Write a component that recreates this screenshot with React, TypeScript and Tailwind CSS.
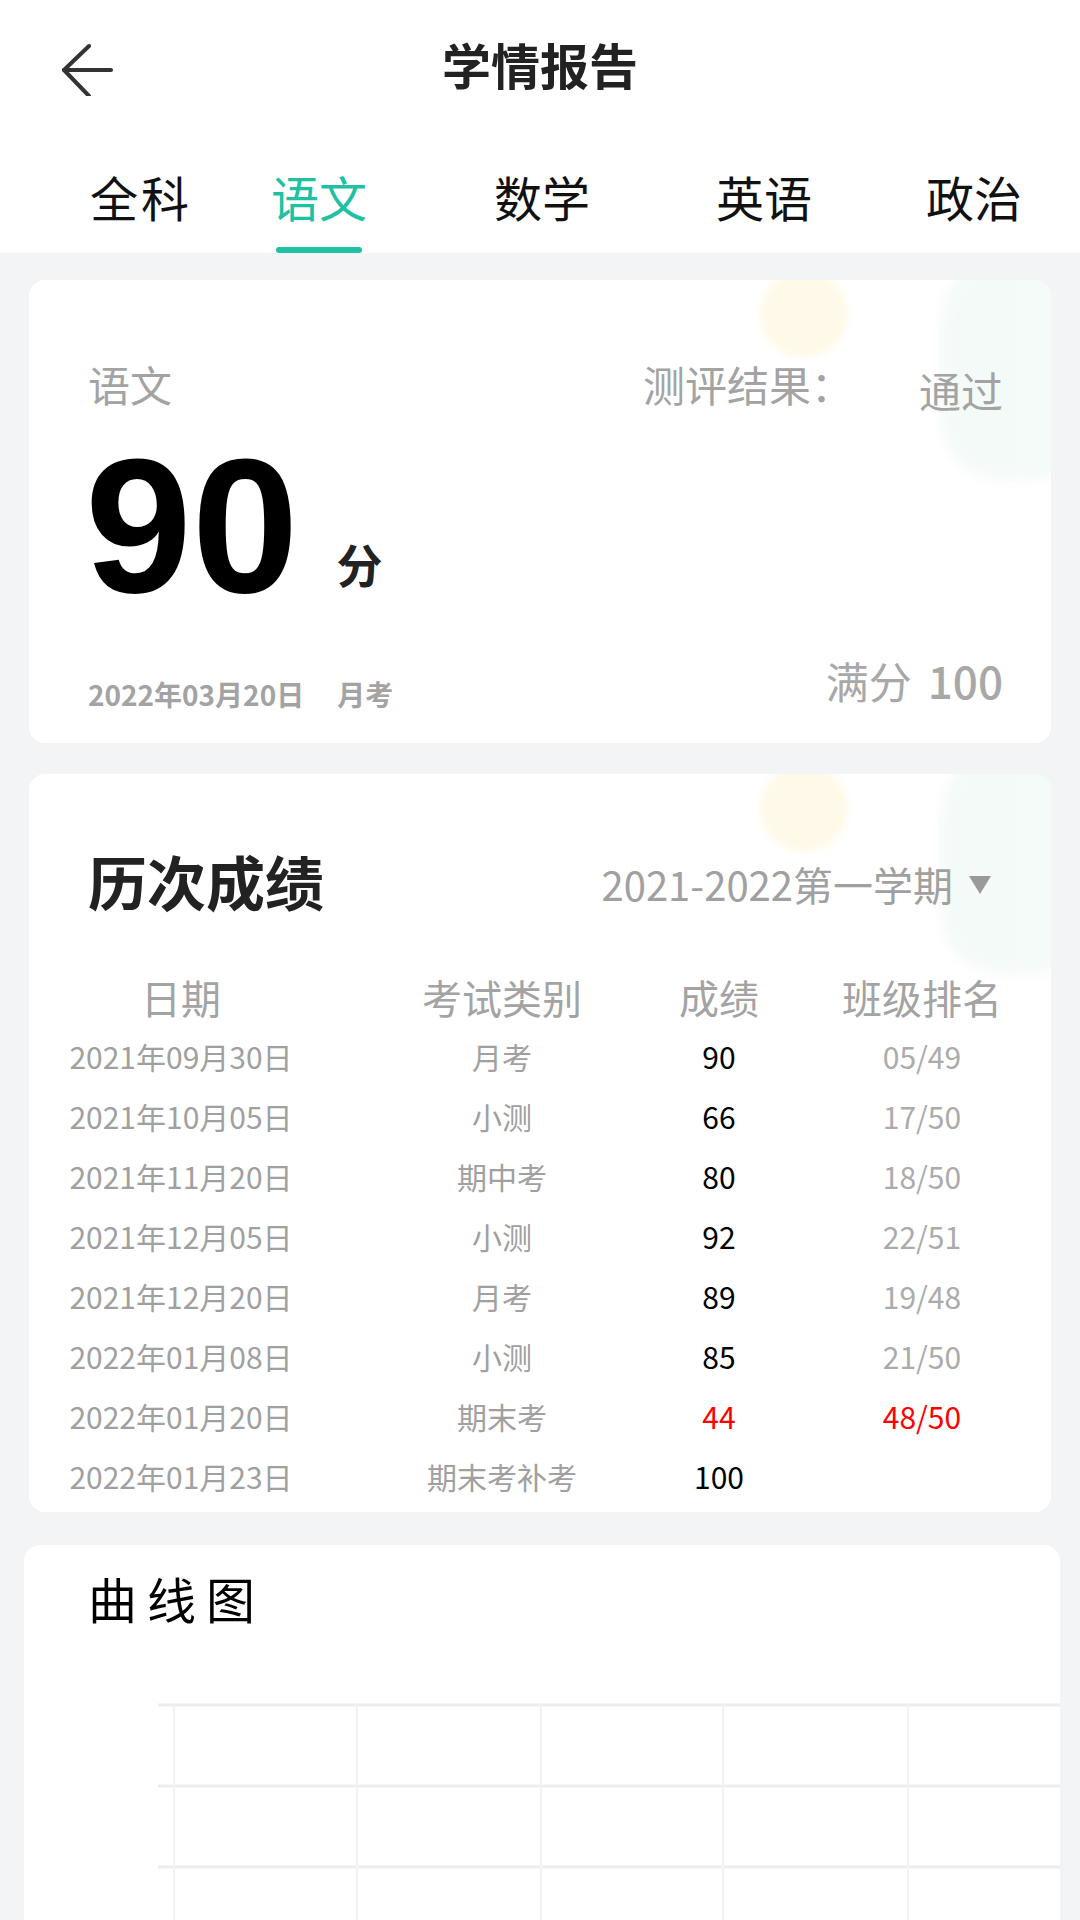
import React from 'react';

const tabs = [
  { name: '全科', ml: 'ml-[90px]', extra: 'tracking-[3px]' },
  { name: '语文', ml: 'ml-[79px]', active: true },
  { name: '数学', ml: 'ml-[127px]' },
  { name: '英语', ml: 'ml-[126px]' },
  { name: '政治', ml: 'ml-[114px]' },
];

const records = [
  { date: '2021年09月30日', type: '月考', score: '90', rank: '05/49' },
  { date: '2021年10月05日', type: '小测', score: '66', rank: '17/50' },
  { date: '2021年11月20日', type: '期中考', score: '80', rank: '18/50' },
  { date: '2021年12月05日', type: '小测', score: '92', rank: '22/51' },
  { date: '2021年12月20日', type: '月考', score: '89', rank: '19/48' },
  { date: '2022年01月08日', type: '小测', score: '85', rank: '21/50' },
  { date: '2022年01月20日', type: '期末考', score: '44', rank: '48/50', fail: true },
  { date: '2022年01月23日', type: '期末考补考', score: '100', rank: '' },
];

function BackArrow() {
  return (
    <svg width="60" height="60" viewBox="0 0 60 60" fill="none" stroke="#333" strokeWidth="4" strokeLinecap="round" strokeLinejoin="round">
      <path d="M31 10 L6 34 L31 60" />
      <path d="M6 34 L53 34" />
    </svg>
  );
}

function Blobs() {
  return (
    <>
      <div className="absolute left-[731px] top-[-10px] w-[88px] h-[88px] rounded-full bg-[#fff8e4] blur-[3px] opacity-80 pointer-events-none" />
      <div className="absolute left-[912px] top-[-20px] w-[150px] h-[220px] rounded-[60px] bg-[#f0f9f5] blur-[6px] opacity-70 pointer-events-none" />
    </>
  );
}

function ChartGrid() {
  const hs = [6, 87, 168];
  const vs = [150, 333, 517, 699, 884];
  return (
    <svg width="1036" height="230" viewBox="0 0 1036 230" className="block">
      {hs.map((y) => (
        <line key={y} x1="134" y1={y} x2="1036" y2={y} stroke="#ededed" strokeWidth="3" />
      ))}
      {vs.map((x) => (
        <line key={x} x1={x} y1="6" x2={x} y2="230" stroke="#f2f2f2" strokeWidth="2" />
      ))}
    </svg>
  );
}

export default function App() {
  return (
    <div className="w-[1080px] min-h-[1920px] bg-[#f3f4f6] overflow-hidden font-['Noto_Sans_CJK_SC',sans-serif]">
      {/* header */}
      <div className="bg-white h-[253px]">
        <div className="h-[130px] grid grid-cols-[1fr_auto_1fr] items-center">
          <div className="pl-[58px] pt-[2px]">
            <BackArrow />
          </div>
          <div className="text-[49px] leading-none font-bold text-[#222] mb-[4px]">学情报告</div>
          <div />
        </div>
        <div className="flex items-start pt-[42px]">
          {tabs.map((t) => (
            <div key={t.name} className={`${t.ml} flex flex-col items-center`}>
              <span className={`text-[48px] leading-[48px] ${t.active ? 'text-[#1ec1a2]' : 'text-[#111]'} ${t.extra ?? ''}`}>
                {t.name}
              </span>
              <div className={`mt-[27px] w-[86px] h-[6px] rounded-full ${t.active ? 'bg-[#1ec1a2]' : 'bg-transparent'}`} />
            </div>
          ))}
        </div>
      </div>

      {/* score card */}
      <div className="relative mt-[27px] mx-[29px] h-[463px] rounded-[16px] bg-white overflow-hidden flex flex-col pl-[59px] pr-[48px] pt-[83px] pb-[35px]">
        <Blobs />
        <div className="relative flex items-start justify-between">
          <span className="text-[42px] leading-[42px] text-[#a3a3a3]">语文</span>
          <div className="flex items-start">
            <span className="text-[42px] leading-[42px] text-[#a3a3a3]">测评结果：</span>
            <span className="ml-[66px] mt-[6px] text-[42px] leading-[42px] text-[#a3a3a3]">通过</span>
          </div>
        </div>
        <div className="relative mt-[19px] flex items-end">
          <span className="ml-[-3px] text-[192px] leading-none font-bold text-black font-['Liberation_Sans',Arial,sans-serif]">90</span>
          <span className="ml-[38px] mb-[36px] text-[46px] leading-[46px] font-bold text-[#222]">分</span>
        </div>
        <div className="relative mt-auto flex items-end justify-between">
          <div className="text-[28px] leading-[28px] font-bold text-[#a3a3a3]">
            <span>2022年03月20日</span>
            <span className="ml-[33px]">月考</span>
          </div>
          <div className="mb-[7px] flex items-end text-[#a8a8a8]">
            <span className="text-[43px] leading-[42px]">满分</span>
            <span className="ml-[16px] text-[44px] leading-[42px] font-medium">100</span>
          </div>
        </div>
      </div>

      {/* history card */}
      <div className="relative mt-[31px] mx-[29px] h-[738px] rounded-[16px] bg-white overflow-hidden pt-[78px]">
        <Blobs />
        <div className="relative flex items-center justify-between pl-[59px] pr-[58px]">
          <span className="text-[59px] leading-[58px] font-bold text-[#222]">历次成绩</span>
          <div className="flex items-center mt-[6px] text-[40px] leading-[40px] text-[#a0a0a0]">
            <span>2021-2022</span>
            <span>第一学期</span>
            <svg width="26" height="22" viewBox="0 0 26 22" className="ml-[14px]">
              <path d="M2 3 L24 3 L13 21 Z" fill="#9a9a9a" />
            </svg>
          </div>
        </div>
        <div className="relative mt-[67px] grid grid-cols-[304px_338px_96px_310px] text-center text-[40px] leading-[40px] text-[#a3a3a3]">
          <span>日期</span>
          <span>考试类别</span>
          <span>成绩</span>
          <span>班级排名</span>
        </div>
        <div className="relative mt-[9px]">
          {records.map((r) => (
            <div key={r.date} className="grid grid-cols-[304px_338px_96px_310px] h-[60px] items-center text-center text-[30px] leading-[30px]">
              <span className="text-[#a0a0a0]">{r.date}</span>
              <span className="text-[#a0a0a0]">{r.type}</span>
              <span className={r.fail ? 'text-[#ff0000]' : 'text-black'}>{r.score}</span>
              <span className={r.fail ? 'text-[#ff0000]' : 'text-[#ababab]'}>{r.rank}</span>
            </div>
          ))}
        </div>
      </div>

      {/* chart card */}
      <div className="mt-[33px] ml-[24px] w-[1036px] h-[375px] rounded-t-[16px] bg-white pt-[28px]">
        <div className="pl-[64px] text-[49px] leading-[49px] tracking-[10px] text-black">曲线图</div>
        <div className="mt-[77px]">
          <ChartGrid />
        </div>
      </div>
    </div>
  );
}
